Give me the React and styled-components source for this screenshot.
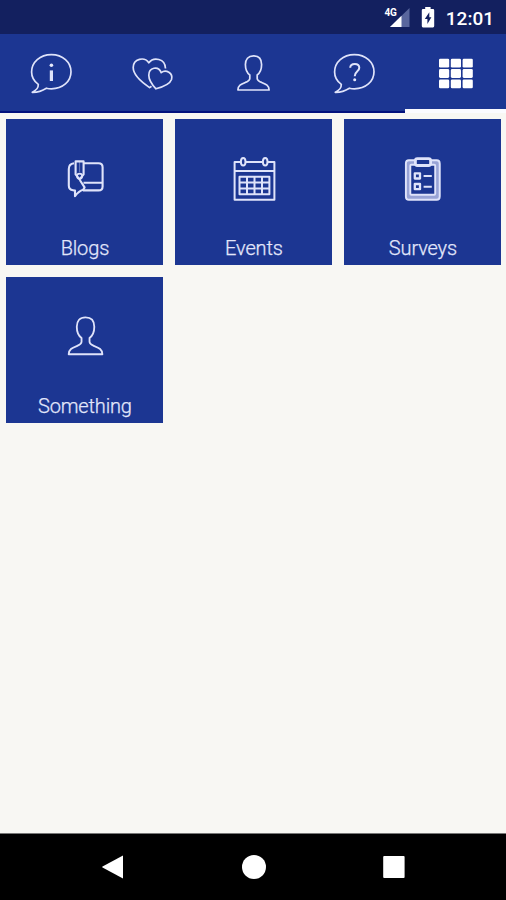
import React from "react";
import styled, { createGlobalStyle } from "styled-components";

const tabs = [
  { id: "info", icon: InfoIcon },
  { id: "favourites", icon: HeartsIcon },
  { id: "profile", icon: PersonIcon },
  { id: "help", icon: QuestionIcon },
  { id: "more", icon: GridIcon },
];

const tiles = [
  { label: "Blogs", icon: BlogIcon },
  { label: "Events", icon: CalendarIcon },
  { label: "Surveys", icon: ClipboardIcon },
  { label: "Something", icon: PersonIcon, scale: 1.08 },
];

function App() {
  return (
    <>
      <GlobalStyle />
      <Screen>
        <StatusBar>
          <Signal />
          <Battery />
          <Clock>12:01</Clock>
        </StatusBar>
        <TabBar>
          {tabs.map(({ id, icon: TabIcon }) => (
            <Tab key={id} $active={id === "more"}>
              <TabIcon />
            </Tab>
          ))}
        </TabBar>
        <Tiles>
          {tiles.map(({ label, icon: TileIcon, scale }) => (
            <Tile key={label}>
              <TileIcon scale={scale} />
              <Label>{label}</Label>
            </Tile>
          ))}
        </Tiles>
        <NavBar>
          <NavButton>
            <svg width="24" height="26" viewBox="0 0 24 26">
              <path d="M22 1.5V24.5L1.5 13.6Q.8 13 1.5 12.4Z" fill="#fff" />
            </svg>
          </NavButton>
          <NavButton>
            <svg width="24" height="26" viewBox="0 0 24 26">
              <circle cx="12" cy="13" r="12" fill="#fff" />
            </svg>
          </NavButton>
          <NavButton>
            <svg width="24" height="26" viewBox="0 0 24 26">
              <rect x="1.2" y="2" width="21.4" height="22" rx="1" fill="#fff" />
            </svg>
          </NavButton>
        </NavBar>
      </Screen>
    </>
  );
}

function Signal() {
  return (
    <SignalIcon width="28" height="22" viewBox="0 0 28 22">
      <path d="M25.5 2V21H6Z" fill="#59669d" />
      <path d="M17.5 9.8V21H6Z" fill="#fff" />
      <rect x="0" y="1" width="13" height="10" fill="#13205f" />
      <SignalText x="0.5" y="9.5">
        4G
      </SignalText>
    </SignalIcon>
  );
}

function Battery() {
  return (
    <svg width="14" height="22" viewBox="0 0 14 22">
      <path
        d="M4.2 1H9.6V3H12Q13.2 3 13.2 4.2V20Q13.2 21.4 12 21.4H2Q.8 21.4 .8 20V4.2Q.8 3 2 3H4.2Z"
        fill="#fff"
      />
      <path d="M8.3 6.3L3.8 13H6.4V18L10.4 11.3H8.3Z" fill="#13205f" />
    </svg>
  );
}

function Bubble() {
  return (
    <path d="M11.3 34.4C7 31.3 4.6 27 4.6 22C4.6 12 13 4.6 24.4 4.6S44 12 44 21.8S35.6 38.8 24.4 38.8Q21.8 38.8 19.4 38.2C15 41 10.5 42.4 5.3 42.3Q11.5 39.2 11.3 34.4Z" />
  );
}

function InfoIcon() {
  return (
    <Icon>
      <Bubble />
      <circle cx="24.4" cy="15.2" r="1.8" fill="#e6e9fb" stroke="none" />
      <path d="M24.4 20.4V31" strokeWidth="3.2" />
    </Icon>
  );
}

function QuestionIcon() {
  return (
    <Icon>
      <Bubble />
      <path
        d="M20.2 17.8C20.4 12.8 29.2 12.7 29.3 17.8C29.4 21.2 24.7 21.3 24.7 26.2"
        strokeWidth="2"
      />
      <circle cx="24.7" cy="29.7" r="1.5" fill="#e6e9fb" stroke="none" />
    </Icon>
  );
}

function HeartsIcon() {
  return (
    <Icon>
      <path d="M23.5 36.2L21.6 37.6C14 32.5 5.2 25.6 5.2 17.6C5.2 8.4 16.6 6.4 20.8 12.8C25.4 6.7 37.3 8.2 37.5 18.6" />
      <path d="M28 38.8C24.2 34.8 20.8 30 20.8 25.2C20.8 17.3 30.4 15.4 33.2 22.6C38 18.8 45.4 23.2 43.5 29.6C41.9 34.3 34.2 37.2 28 38.8Z" />
    </Icon>
  );
}

function PersonIcon({ scale = 1 }) {
  return (
    <Icon $scale={scale}>
      <path d="M24.5 5.9C19.2 5.9 16.4 9.2 16.4 14.6C16.4 19.4 18 23 20.8 25V28.4C20.8 30.4 18.8 31.4 16.4 32.4C12 34.2 9 35.4 8.9 40H40.1C40 35.4 37 34.2 32.6 32.4C30.2 31.4 28.2 30.4 28.2 28.4V25C31 23 32.6 19.4 32.6 14.6C32.6 9.2 29.8 5.9 24.5 5.9Z" />
    </Icon>
  );
}

function GridIcon() {
  return (
    <Icon>
      {[8.7, 19.1, 29.5].map((y) =>
        [8, 19.8, 31.6].map((x) => (
          <rect
            key={`${x}-${y}`}
            x={x}
            y={y}
            width="10.2"
            height="8.8"
            rx="1.3"
            fill="#fff"
            stroke="none"
          />
        ))
      )}
    </Icon>
  );
}

function BlogIcon() {
  return (
    <Icon $weight={2.1}>
      <path d="M23 8.2H37.5Q41.6 8.2 41.6 12.2V31.5Q41.6 35.4 37.5 35.4H22M22.5 27.8H41.5" />
      <path d="M13 8.2Q7.8 8.8 7.8 14V30.5Q7.8 34.8 12 35.2L14 35.6V41.2Q17.5 36.2 22.2 34.8L23.6 32.4L18.8 25" />
      <path d="M14.6 6.4H22.6V19.4L18.6 24.4L14.6 19.4Z" />
      <circle cx="18.6" cy="21.2" r="2.6" strokeWidth="1.6" />
      <path d="M18.6 7V17" strokeWidth="1" opacity="0.4" />
    </Icon>
  );
}

function CalendarIcon() {
  return (
    <Icon $weight={2}>
      <path d="M10.4 7H4.6V44.8H44.4V7H38M16 7H32.4M4.6 16H44.4" />
      <ellipse cx="13.2" cy="6.8" rx="2.3" ry="3.8" />
      <ellipse cx="35.2" cy="6.8" rx="2.3" ry="3.8" />
      <path d="M9.5 21.8H39.4V39.2H9.5ZM9.5 27.6H39.4M9.5 33.4H39.4M17 21.8V39.2M24.5 21.8V39.2M32 21.8V39.2" />
    </Icon>
  );
}

function ClipboardIcon() {
  return (
    <Icon $weight={1.9}>
      <rect x="9" y="7.4" width="29.8" height="35" rx="2" stroke="#98a3d6" strokeWidth="5" />
      <rect x="6.9" y="5.2" width="33.8" height="39.5" rx="3" />
      <rect x="11.3" y="9.8" width="24.9" height="29.9" rx="1" />
      <rect x="16.4" y="3.7" width="15.2" height="6.8" rx="2" fill="#1c3692" strokeWidth="2.8" />
      <rect x="15.8" y="18.3" width="5.2" height="5.2" strokeWidth="2.3" />
      <rect x="15.8" y="29" width="5.2" height="5.2" strokeWidth="2.3" />
      <path d="M24.6 21H32.8M24.6 31.7H32.8" />
    </Icon>
  );
}

const GlobalStyle = createGlobalStyle`
  body {
    margin: 0;
    font-family: Roboto, sans-serif;
  }
`;

const Screen = styled.main`
  display: flex;
  flex-direction: column;
  width: 506px;
  height: 900px;
  background: #f8f7f3;
  overflow: hidden;
`;

const StatusBar = styled.header`
  display: flex;
  align-items: center;
  justify-content: flex-end;
  height: 34px;
  padding-right: 12px;
  box-sizing: border-box;
  background: #13205f;
`;

const SignalIcon = styled.svg`
  margin-right: 9px;
`;

const SignalText = styled.text`
  font-family: Roboto, sans-serif;
  font-size: 10px;
  font-weight: 700;
  letter-spacing: -0.3px;
  fill: #fff;
`;

const Clock = styled.span`
  margin-left: 11px;
  padding-top: 3px;
  color: #fff;
  font-size: 19px;
  font-weight: 500;
  line-height: 22px;
`;

const TabBar = styled.nav`
  display: grid;
  grid-template-columns: repeat(5, 1fr);
  height: 79px;
  background: #1c3692;
`;

const Tab = styled.div`
  display: flex;
  justify-content: center;
  padding-top: 16px;
  box-sizing: border-box;
  border-bottom: ${({ $active }) =>
    $active ? "4px solid #fbfbff" : "2px solid #03127d"};
`;

const Icon = styled.svg.attrs({ viewBox: "0 0 48 48" })`
  display: block;
  flex: none;
  width: 48px;
  height: 48px;
  overflow: visible;
  fill: none;
  stroke: #dfe3fa;
  stroke-width: ${({ $weight }) => $weight || 1.7};
  stroke-linejoin: round;
  transform: scale(${({ $scale }) => $scale || 1});
`;

const Tiles = styled.section`
  display: grid;
  grid-template-columns: repeat(3, 157px);
  grid-auto-rows: 146px;
  align-content: start;
  gap: 12px;
  flex: 1;
  padding: 6px 0 0 6.4px;
`;

const Tile = styled.div`
  display: flex;
  flex-direction: column;
  align-items: center;
  justify-content: space-between;
  padding: 36px 0 5px;
  box-sizing: border-box;
  background: #1c3692;
`;

const Label = styled.span`
  color: #e3e7fb;
  font-size: 20px;
  font-weight: 300;
  letter-spacing: -0.15px;
  line-height: 24px;
  -webkit-text-stroke: 0.25px #e3e7fb;
`;

const NavBar = styled.footer`
  display: flex;
  justify-content: center;
  gap: 116.5px;
  height: 67px;
  padding: 20px 0 0 1px;
  box-sizing: border-box;
  background: #000;
  border-top: 1px solid #777;
`;

const NavButton = styled.div`
  width: 24px;
  height: 26px;
`;

export default App;
